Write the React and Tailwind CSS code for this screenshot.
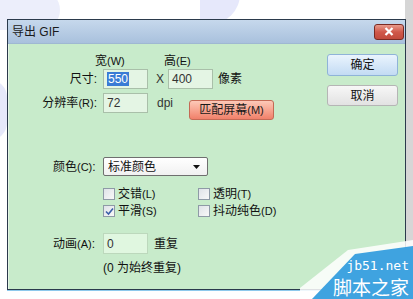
import React from "react";

const font = { fontFamily: '"Liberation Sans", "Noto Sans CJK SC", sans-serif' };

function Input({ value, selected, w = "w-[45px]" }) {
  return (
    <div className={`${w} h-[20px] border border-[#a9bfa9] bg-[#e4f5e4] flex items-center pl-[3px] text-[12px] text-[#333]`}>
      {selected ? (
        <span className="bg-[#3a7bd5] text-white leading-[14px] px-[1px]">{value}</span>
      ) : (
        <span className="leading-[14px]">{value}</span>
      )}
    </div>
  );
}

function Check({ checked, label, hot }) {
  return (
    <div className="flex items-center gap-[3px] h-[14px]">
      <div className="w-[12px] h-[12px] border border-[#8e9aa6] bg-gradient-to-br from-[#dfe3e8] to-[#f8f8f8] flex items-center justify-center">
        {checked && (
          <svg width="9" height="9" viewBox="0 0 9 9">
            <path d="M1 4.5 L3.5 7 L8 1.5" fill="none" stroke="#3b5fa8" strokeWidth="1.6" />
          </svg>
        )}
      </div>
      <span className="text-[12px] leading-[14px] text-[#111]">
        {label}
        <span className="text-[11px]">({hot})</span>
      </span>
    </div>
  );
}

export default function App() {
  return (
    <div className="relative w-[413px] h-[299px] overflow-hidden bg-white" style={font}>
      {/* background decorations */}
      <div className="absolute left-[-20px] top-[-10px] w-[80px] h-[40px] rounded-full bg-[#eceefb]" />
      <div className="absolute left-[200px] top-[-6px] w-[40px] h-[30px] rounded-br-[30px] bg-[#e6e8fb]" />
      <div className="absolute left-[-10px] top-[80px] w-[17px] h-[60px] rounded-r-full bg-[#e6e8fa]" />
      <div className="absolute right-0 top-0 w-[8px] h-[299px] bg-[#d6d6d6]" />

      <div className="relative ml-[7px] mt-[19px] w-[399px] h-[271px] border border-[#2b3a4c] bg-[#c8ebcb] flex flex-col">
        {/* title bar */}
        <div className="h-[24px] bg-gradient-to-b from-[#c6d8ec] to-[#a9c1dd] flex items-center justify-between pl-[4px] pr-[1px] border-b border-[#9fb8d2]">
          <span className="text-[12px] text-[#1a1a1a] leading-[14px]">导出 GIF</span>
          <div className="w-[30px] h-[16px] rounded-[3px] border border-[#7a2a22] bg-gradient-to-b from-[#e89a8c] via-[#d0584a] to-[#c24a3c] flex items-center justify-center">
            <svg width="10" height="9" viewBox="0 0 10 9">
              <path d="M1.5 1 L8.5 8 M8.5 1 L1.5 8" stroke="white" strokeWidth="2.2" />
            </svg>
          </div>
        </div>

        {/* body */}
        <div className="flex-1 flex border-l border-[#e6f6e6]">
          <div className="w-[310px] flex flex-col">
            {/* header row */}
            <div className="flex mt-[10px] h-[14px] text-[12px] leading-[14px] text-[#111]">
              <span className="ml-[86px] w-[69px]">宽<span className="text-[11px]">(W)</span></span>
              <span>高<span className="text-[11px]">(E)</span></span>
            </div>
            {/* size row */}
            <div className="flex items-center mt-[1px] h-[20px] text-[12px] text-[#111]">
              <span className="w-[89px] text-right pr-[1px]">尺寸:</span>
              <div className="ml-[5px]"><Input value="550" selected /></div>
              <span className="ml-[8px] w-[12px] text-[#333]">X</span>
              <Input value="400" />
              <span className="ml-[5px]">像素</span>
            </div>
            {/* resolution row */}
            <div className="flex items-center mt-[4px] h-[20px] text-[12px] text-[#111]">
              <span className="w-[89px] text-right pr-[1px]">分辨率<span className="text-[11px]">(R)</span>:</span>
              <div className="ml-[5px]"><Input value="72" /></div>
              <span className="ml-[9px] text-[#333]">dpi</span>
              <div className="ml-[16px] mt-[14px] w-[85px] h-[20px] rounded-[3px] border border-[#c46a55] bg-gradient-to-b from-[#fcc9b8] to-[#f0806a] flex items-center justify-center text-[12px] text-[#1a1a1a]">
                匹配屏幕<span className="text-[11px]">(M)</span>
              </div>
            </div>
            {/* color row */}
            <div className="flex items-center mt-[44px] h-[19px] text-[12px] text-[#111]">
              <span className="ml-[44px] w-[50px]">颜色<span className="text-[11px]">(C)</span>:</span>
              <div className="w-[105px] h-[19px] rounded-[2px] border border-[#6f6f6f] bg-gradient-to-b from-white to-[#f1f1f1] flex items-center justify-between pl-[4px] pr-[7px]">
                <span className="leading-[14px]">标准颜色</span>
                <svg width="7" height="4" viewBox="0 0 7 4"><path d="M0 0 H7 L3.5 4 Z" fill="#111" /></svg>
              </div>
            </div>
            {/* checkbox rows */}
            <div className="grid grid-cols-[95px_auto] ml-[94px] mt-[11px] gap-y-[3px]">
              <Check label="交错" hot="L" />
              <Check label="透明" hot="T" />
              <Check checked label="平滑" hot="S" />
              <Check label="抖动纯色" hot="D" />
            </div>
            {/* animation row */}
            <div className="flex items-center mt-[15px] h-[21px] text-[12px] text-[#111]">
              <span className="ml-[44px] w-[50px]">动画<span className="text-[11px]">(A)</span>:</span>
              <div className="w-[45px] h-[21px] border border-[#bcd8bc] bg-[#e0f7e0] flex items-center pl-[3px] text-[#333]">0</div>
              <span className="ml-[6px]">重复</span>
            </div>
            <div className="ml-[94px] mt-[7px] text-[12px] leading-[14px] text-[#111]">(0 为始终重复)</div>
          </div>

          {/* right buttons */}
          <div className="flex flex-col ml-[8px] mt-[10px] gap-[9px]">
            <div className="w-[71px] h-[22px] rounded-[3px] border border-[#8fb3d8] bg-gradient-to-b from-[#eaf4fd] to-[#c3dbf3] flex items-center justify-center text-[12px] text-[#111]">确定</div>
            <div className="w-[71px] h-[21px] rounded-[3px] border border-[#b5b5b5] bg-gradient-to-b from-[#f7f7f7] to-[#e2e2e2] flex items-center justify-center text-[12px] text-[#111]">取消</div>
          </div>
        </div>
      </div>
      <div className="ml-[7px] w-[399px] h-[1px] bg-[#8ec9ec]" />

      {/* watermark */}
      <svg className="absolute right-0 bottom-0" width="113" height="59" viewBox="0 0 113 59">
        <polygon points="0,48 48,10 113,0 113,59 0,59" fill="#ffffff" opacity="0.85" />
        <polygon points="12,59 55,14 113,6 113,59" fill="#3fa3e0" />
      </svg>
      <div className="absolute right-[4px] bottom-[27px] text-[13px] leading-[13px] text-white" style={{ fontFamily: '"DejaVu Sans Mono", monospace' }}>jb51.net</div>
      <div className="absolute right-[4px] bottom-[2px] text-[19px] leading-[20px] text-white" style={{ fontFamily: '"Noto Sans CJK SC", sans-serif' }}>脚本之家</div>
    </div>
  );
}
